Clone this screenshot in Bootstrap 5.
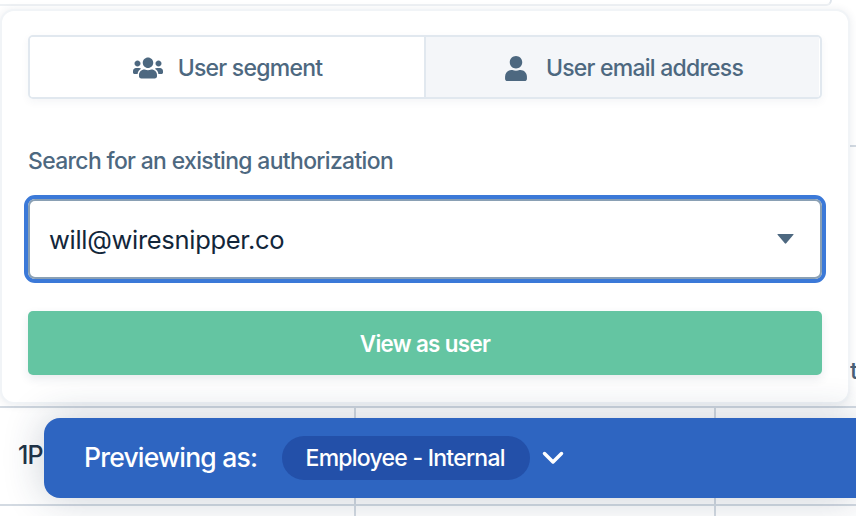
<!DOCTYPE html>
<html lang="en">
<head>
<meta charset="utf-8">
<title>Preview</title>
<link href="https://cdn.jsdelivr.net/npm/bootstrap@5.3.0/dist/css/bootstrap.min.css" rel="stylesheet">
<style>
html,body{margin:0;width:856px;height:516px;overflow:hidden;background:#fff;}
body{font-family:Inter,"Liberation Sans",sans-serif;letter-spacing:-.025em;}
.stage{position:relative;width:856px;height:516px;overflow:hidden;}
.top-edge{height:6px;width:832px;border-right:2px solid #dfe5ec;border-bottom:2px solid #eef1f4;border-bottom-right-radius:6px;}
.tcol-a{width:354px;flex:none;}
.tcol-b{width:360px;flex:none;border-left:2px solid #d3dae2;}
.tcol-c{flex:1;border-left:2px solid #d3dae2;}
.tline{border-bottom:2px solid #d3dae2;}
.h-upper{height:141px;}
.h-lower{height:261px;}
.h-row{height:98px;}
.t-frag{font-size:24px;color:#4a6178;padding:210px 0 0 850px;line-height:28px;white-space:nowrap;font-weight:500;}
.one-p{font-size:25px;color:#1f3347;font-weight:550;padding:33px 0 0 18px;line-height:28px;letter-spacing:-.04em;}
.pop{position:absolute;left:0;top:9px;width:850px;height:395px;background:#fff;border:2px solid #f1f4f7;border-radius:14px;padding:24px 26px;box-shadow:0 1px 8px rgba(40,60,90,.1);}
.seg{display:flex;height:64px;border:2px solid #e1e8ef;border-radius:5px;box-shadow:0 3px 8px rgba(40,60,90,.05);overflow:hidden;}
.seg-btn{flex:0 0 50%;display:flex;align-items:center;justify-content:center;gap:15px;font-size:23px;font-weight:550;color:#4d6880;background:#fff;border:0;padding:2px 0 0;letter-spacing:-.033em;}
.seg-btn+.seg-btn{background:#f4f6f9;border-left:2px solid #e1e8ef;gap:19px;padding-left:3px;margin-left:-1px;}
.seg-ico{fill:#4d6880;display:block;}
.fld-label{font-size:22.9px;font-weight:550;color:#4d6880;margin:47px 0 0;line-height:30px;letter-spacing:-.028em;}
.pick{margin:19px -4px 0;height:88px;border:4px solid #3b79d8;border-radius:11px;}
.pick-in{height:100%;display:flex;align-items:center;justify-content:space-between;padding:3px 26px 0 19px;border:2px solid #8aa0b4;border-radius:7px;background:#fff;font-size:25.5px;color:#12263a;letter-spacing:-.012em;font-weight:400;}
.caret-ico{fill:#4d6880;display:block;margin-top:-3px;}
.go{display:block;width:100%;height:64px;margin-top:28px;padding-top:8px;background:#64c5a2;border:0;border-radius:5px;color:#fff;font-size:22.4px;font-weight:600;box-shadow:0 4px 10px rgba(40,60,90,.1);letter-spacing:-.03em;}
.go:hover{background:#64c5a2;color:#fff;}
.bar{position:absolute;left:44px;top:418px;width:812px;height:80px;background:#2e65c1;border-radius:16px 0 0 16px;display:flex;align-items:center;padding-left:40px;color:#fff;box-shadow:0 0 40px rgba(30,50,80,.24);}
.bar-lbl{font-size:26.5px;font-weight:550;letter-spacing:-.03em;margin-right:25px;}
.pill{height:44px;width:248px;border-radius:22px;background:#2350a9;display:flex;align-items:center;justify-content:center;padding-right:2px;font-size:23px;font-weight:550;letter-spacing:-.033em;}
.chev{margin-left:12px;display:block;}
</style>
</head>
<body>
<div class="stage">
  <div class="top-edge"></div>
  <div class="h-upper tline"></div>
  <div class="h-lower tline"><div class="t-frag">t</div></div>
  <div class="d-flex tline h-row">
    <div class="tcol-a one-p">1P</div>
    <div class="tcol-b"></div>
    <div class="tcol-c"></div>
  </div>
  <div class="d-flex h-row">
    <div class="tcol-a"></div>
    <div class="tcol-b"></div>
    <div class="tcol-c"></div>
  </div>

  <div class="pop">
    <div class="seg">
      <button type="button" class="seg-btn">
        <svg class="seg-ico" width="30" height="24" viewBox="0 0 640 512"><path d="M96 224c35.300 0 64-28.700 64-64s-28.700-64-64-64-64 28.700-64 64 28.700 64 64 64zm448 0c35.300 0 64-28.700 64-64s-28.700-64-64-64-64 28.700-64 64 28.700 64 64 64zm32 32h-64c-17.600 0-33.500 7.100-45.100 18.600 40.300 22.100 68.900 62 75.100 109.400h66c17.700 0 32-14.300 32-32v-32c0-35.300-28.700-64-64-64zm-256 0c61.900 0 112-50.100 112-112S381.900 32 320 32 208 82.100 208 144s50.100 112 112 112zm76.800 32h-8.300c-20.800 10-43.900 16-68.500 16s-47.600-6-68.500-16h-8.300C179.600 288 128 339.600 128 403.200V432c0 26.500 21.500 48 48 48h288c26.500 0 48-21.500 48-48v-28.800c0-63.600-51.600-115.200-115.200-115.200zm-223.700-13.400C161.500 263.100 145.600 256 128 256H64c-35.300 0-64 28.700-64 64v32c0 17.700 14.300 32 32 32h65.900c6.300-47.400 34.900-87.300 75.200-109.400z"/></svg>
        <span>User segment</span>
      </button>
      <button type="button" class="seg-btn">
        <svg class="seg-ico" width="22" height="25" viewBox="0 0 448 512"><path d="M224 256c70.700 0 128-57.300 128-128S294.700 0 224 0 96 57.300 96 128s57.300 128 128 128zm89.600 32h-16.700c-22.200 10.200-46.900 16-72.900 16s-50.600-5.800-72.900-16h-16.700C60.200 288 0 348.200 0 422.400V464c0 26.500 21.500 48 48 48h352c26.500 0 48-21.500 48-48v-41.600c0-74.200-60.200-134.400-134.400-134.400z"/></svg>
        <span>User email address</span>
      </button>
    </div>
    <p class="fld-label">Search for an existing authorization</p>
    <div class="pick">
      <div class="pick-in">
        <span>will@wiresnipper.co</span>
        <svg class="caret-ico" width="17" height="10" viewBox="0 0 17 10"><path d="M1 0h15q1 0 .4.800L9.200 9.300q-.7.700-1.400 0L.6.800Q0 0 1 0z"/></svg>
      </div>
    </div>
    <button type="button" class="btn go">View as user</button>
  </div>

  <div class="bar">
    <span class="bar-lbl">Previewing as:</span>
    <span class="pill">Employee - Internal</span>
    <svg class="chev" width="22" height="14" viewBox="0 0 22 14"><path d="M2.500 2.500L11 11l8.500-8.500" fill="none" stroke="#fff" stroke-width="3.500" stroke-linecap="round" stroke-linejoin="round"/></svg>
  </div>
</div>
</body>
</html>
